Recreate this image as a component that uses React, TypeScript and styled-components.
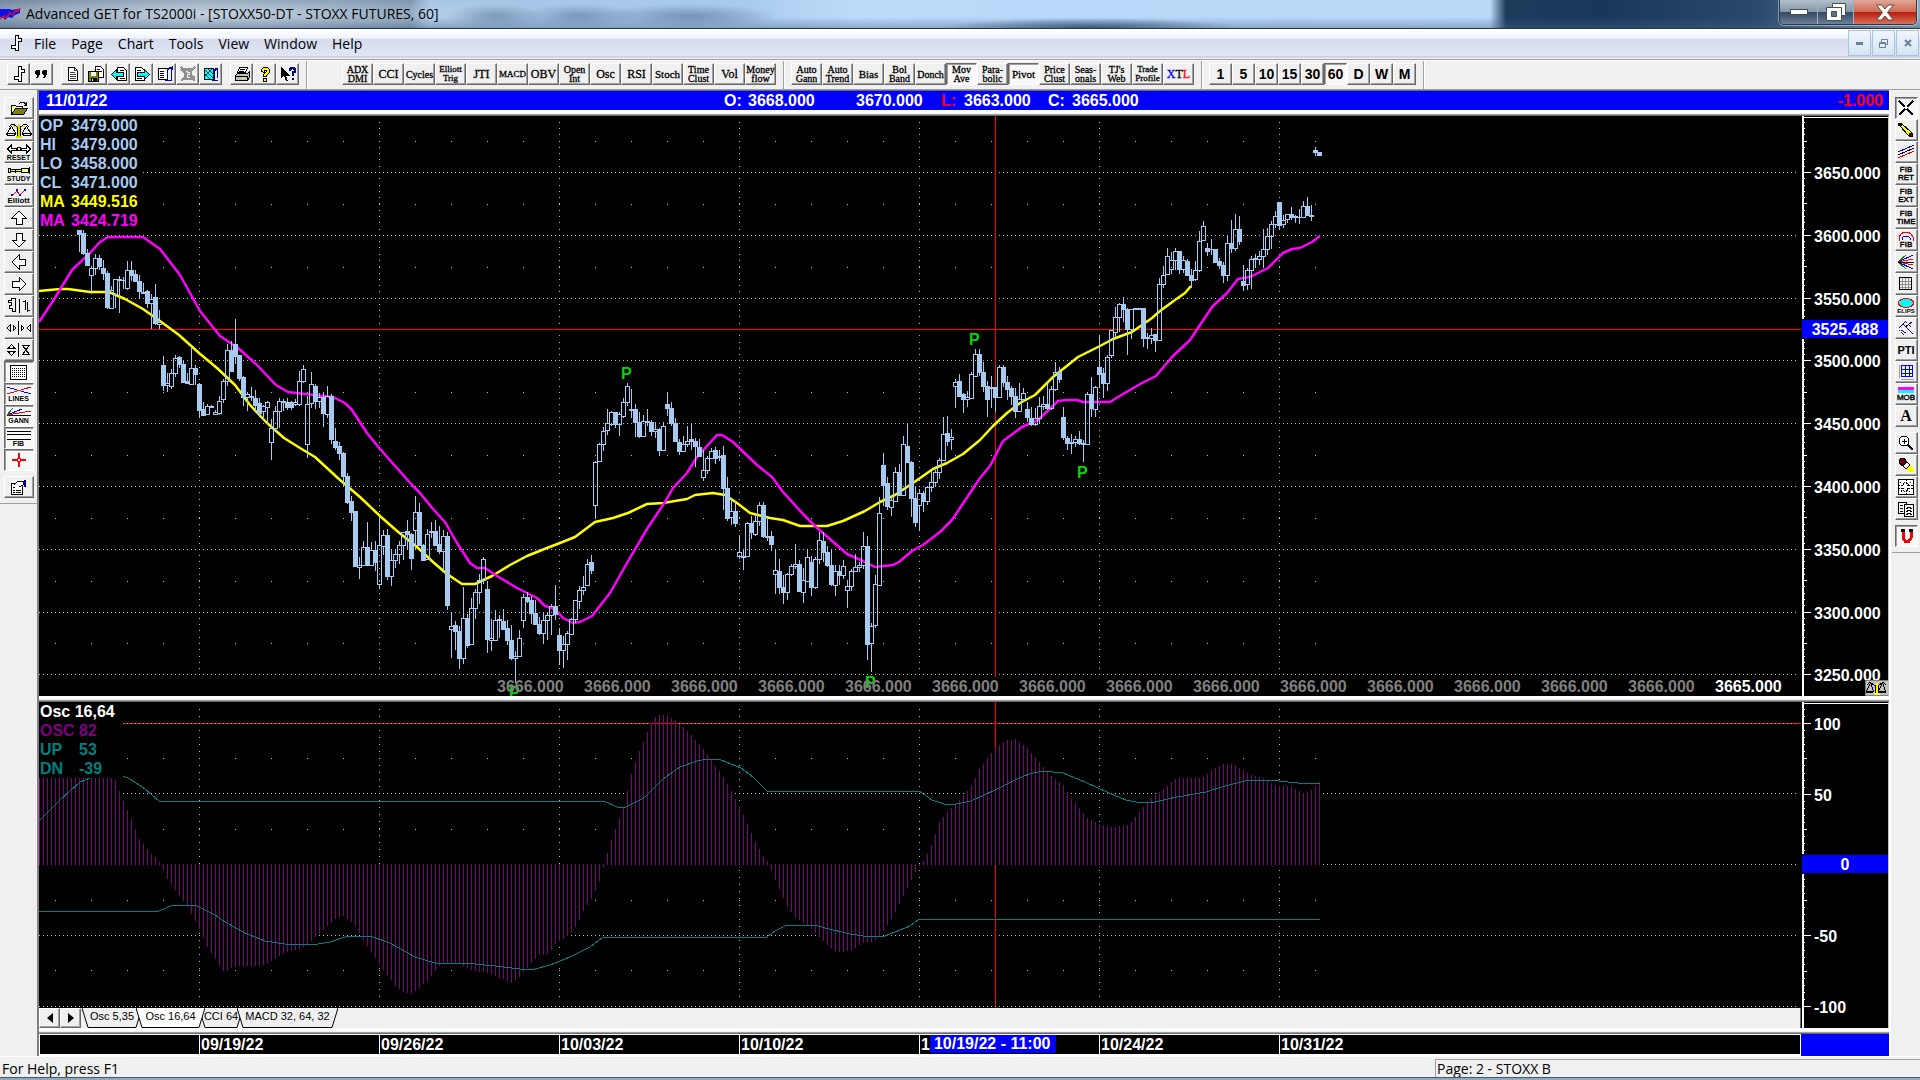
import React from 'react';
import styled, { createGlobalStyle, css } from 'styled-components';

const Global = createGlobalStyle`
  * { box-sizing: border-box; }
  html, body { margin: 0; padding: 0; }
  body { background: #f0f0f0; color: #000; font-family: 'Open Sans', 'Noto Sans', sans-serif; font-size: 14px; overflow: hidden; }
  button { font: inherit; color: inherit; margin: 0; padding: 0; border: 0; background: none; }
  svg { display: block; }
`;

const arial = "'Liberation Sans', Arial, sans-serif";

/* ---------- window frame ---------- */

const Window = styled.div`
  display: flex;
  flex-direction: column;
  height: 100vh;
  background: #f0f0f0;
  border-bottom: 2px solid #8fa9c0;
`;

const TitleBar = styled.header`
  display: flex;
  align-items: center;
  flex: 0 0 29px;
  border-bottom: 1px solid #2b3644;
  padding: 0 3px 0 0;
  background:
    radial-gradient(ellipse 480px 26px at 210px 14px, rgba(214, 226, 238, 0.75), rgba(214, 226, 238, 0) 75%),
    radial-gradient(ellipse 50px 12px at 495px 16px, rgba(62, 92, 128, 0.55), transparent),
    radial-gradient(ellipse 60px 12px at 580px 16px, rgba(62, 92, 128, 0.45), transparent),
    radial-gradient(ellipse 90px 12px at 690px 16px, rgba(62, 92, 128, 0.5), transparent),
    radial-gradient(ellipse 150px 10px at 1090px 28px, rgba(52, 82, 116, 0.9), transparent),
    linear-gradient(180deg, transparent 60%, rgba(70, 100, 130, 0.4)),
    linear-gradient(90deg, #6d8399 0, #8ba0b5 200px, #7590aa 410px, #a4c4e4 430px, #a9cbeb 740px, #bcdcfb 860px, #b7d8f8 1040px, #b9d9f8 1490px, #1d3c5c 1506px, #18375a 1600px, #2a496b 1760px, #93a9bd 100%);
`;

const Title = styled.h1`
  flex: 1;
  margin: 0;
  padding-left: 5px;
  font-size: 14px;
  font-weight: 400;
  line-height: 28px;
  white-space: nowrap;
`;

const Captions = styled.div`
  display: flex;
  align-self: flex-start;
  height: 25px;
  border: 1px solid #26394d;
  border-top: 0;
  border-radius: 0 0 5px 5px;
  overflow: hidden;
  box-shadow: 0 0 0 1px rgba(255, 255, 255, 0.4);
`;

const Caption = styled.button<{ $w: number; $close?: boolean }>`
  display: flex;
  align-items: center;
  justify-content: center;
  width: ${p => p.$w}px;
  border-right: 1px solid #9fb0c0;
  background: linear-gradient(180deg, #b3bfca 0, #8496a8 48%, #33475e 50%, #6b8199 100%);
  ${p => p.$close && css`
    border: 0;
    background: linear-gradient(180deg, #e0a596 0, #cf6c56 48%, #b81b0c 50%, #d8705a 100%);
  `}
`;

const MenuBar = styled.nav`
  display: flex;
  align-items: center;
  flex: 0 0 31px;
  padding: 0 0 2px 8px;
  border-bottom: 1px solid #a0a0a0;
  background: linear-gradient(180deg, #fff 0, #f2f4fa 9px, #d5dbed 10px, #e1e6f5 27px, #b6bccc 28px, #f0f0f0 29px);
`;

const MenuList = styled.div`
  display: flex;
  gap: 1px;
  flex: 1;
  padding-left: 3px;
`;

const MenuItem = styled.button`
  height: 26px;
  padding: 0 7px;
`;

const DocButton = styled.button`
  display: flex;
  align-items: center;
  justify-content: center;
  width: 23px;
  height: 26px;
  margin-right: 1px;
  border: 1px solid #a9c3dc;
  background: linear-gradient(180deg, #f0f6fc, #d4e5f6);
`;

/* ---------- toolbars ---------- */

const Toolbars = styled.div`
  display: flex;
  flex: 0 0 30px;
  border-top: 1px solid #fff;
  border-bottom: 1px solid #a0a0a0;
`;

const ToolGroup = styled.div<{ $after?: number }>`
  display: flex;
  align-items: flex-start;
  padding: 2px 7px 0 7px;
  margin-right: ${p => p.$after ?? 0}px;
  border-right: 1px solid #a0a0a0;
  box-shadow: 1px 0 0 #fff;
`;

const Spacer = styled.div<{ $h?: boolean }>`
  flex: 0 0 ${p => (p.$h ? 5 : 8)}px;
`;

const pressedLook = css`
  border-color: #696969 #fff #fff #696969;
  background: #f8f8f8;
  box-shadow: inset 1px 1px 0 #a0a0a0;
`;

const raisedLook = css`
  border-color: #fff #696969 #696969 #fff;
  background: #f0f0f0;
  box-shadow: inset -1px -1px 0 #a0a0a0;
`;

const ToolButton = styled.button<{ $w: number; $down?: boolean }>`
  display: flex;
  flex-direction: column;
  align-items: center;
  justify-content: center;
  flex: none;
  width: ${p => p.$w}px;
  height: 22px;
  border: 1px solid;
  overflow: hidden;
  white-space: nowrap;
  ${p => (p.$down ? pressedLook : raisedLook)}
`;

const StudyText = styled.span<{ $size: number }>`
  font: ${p => p.$size}px/9px 'Liberation Serif', 'Times New Roman', serif;
  -webkit-text-stroke: 0.3px #000;
`;

const Tint = styled.span<{ $c: string }>`
  color: ${p => p.$c};
  -webkit-text-stroke-color: ${p => p.$c};
`;

const FrameText = styled.span`
  font: bold 14px/18px ${arial};
`;

const Tiny = styled.span<{ $size?: number; $bold?: boolean; $serif?: boolean }>`
  font-family: ${p => (p.$serif ? "'Liberation Serif', serif" : arial)};
  font-size: ${p => p.$size ?? 7}px;
  line-height: ${p => p.$size ?? 7}px;
  font-weight: ${p => (p.$bold ? 700 : 400)};
  ${p => !p.$bold && '-webkit-text-stroke: 0.4px #000;'}
`;

const Body = styled.main`
  display: flex;
  flex: 1;
  min-height: 0;
`;

const SideBar = styled.aside<{ $w: number; $end: number }>`
  display: flex;
  flex-direction: column;
  align-items: center;
  align-self: flex-start;
  flex: 0 0 ${p => p.$w}px;
  padding: 7px 0 ${p => p.$end}px 0;
  border-bottom: 1px solid #a0a0a0;
`;

/* ---------- chart area ---------- */

const Charts = styled.section`
  display: flex;
  flex-direction: column;
  flex: 1;
  min-width: 0;
  border-left: 2px solid #808080;
  border-right: 2px solid #fff;
  margin-right: 1px;
`;

const InfoBar = styled.div`
  display: flex;
  align-items: center;
  flex: 0 0 20px;
  padding: 0 6px 0 7px;
  border-top: 1px solid #696969;
  background: #0000ff;
  color: #fff;
  font: bold 16px/19px ${arial};
`;

const Field = styled.span<{ $w: number; $red?: boolean }>`
  flex: 0 0 ${p => p.$w}px;
  ${p => p.$red && 'color: #ff0000;'}
`;

const Change = styled.span`
  margin-left: auto;
  color: #ff0000;
`;

const Divider = styled.div`
  flex: 0 0 6px;
  background: linear-gradient(180deg, #fff 0 3px, #f0f0f0 3px 4px, #a0a0a0 4px 5px, #696969 5px 6px);
`;

const Row = styled.div<{ $grow?: boolean }>`
  display: flex;
  flex: ${p => (p.$grow ? '1 1 0' : 'none')};
  min-height: 0;
  background: #000;
`;

const Plot = styled.div`
  position: relative;
  flex: 1;
  min-width: 0;
  overflow: hidden;
  background: #000;
`;

const OscColumn = styled.div`
  display: flex;
  flex-direction: column;
  flex: 1;
  min-width: 0;
`;

const OscPlot = styled(Plot)`
  flex: 0 0 306px;
`;

const Canvas = styled.svg`
  width: 100%;
  height: 100%;
  text { font: bold 16px ${arial}; }
`;

const Axis = styled.div`
  flex: 0 0 88px;
  background: #000;
  border-right: 1px solid #c8c4bc;
`;

const Legend = styled.dl<{ $w: number; $label: number }>`
  position: absolute;
  left: 0;
  top: 0;
  display: grid;
  grid-template-columns: ${p => p.$label}px auto;
  width: ${p => p.$w}px;
  margin: 0;
  padding-left: 1px;
  background: #000;
  color: #a6caf0;
  font: bold 16px/19px ${arial};
  white-space: nowrap;
`;

const Term = styled.dt<{ $c?: string; $wide?: boolean }>`
  color: ${p => p.$c ?? 'inherit'};
  ${p => p.$wide && 'grid-column: 1 / 3;'}
`;

const Value = styled.dd<{ $c?: string }>`
  margin: 0;
  color: ${p => p.$c ?? 'inherit'};
`;

const TabStrip = styled.div`
  display: flex;
  flex: 0 0 20px;
  background: #f0f0f0;
  border-right: 1px solid #696969;
`;

const ScrollButton = styled.button`
  display: flex;
  align-items: center;
  justify-content: center;
  width: 21px;
  height: 20px;
  border: 1px solid;
  ${raisedLook}
`;

const Tabs = styled.div`
  display: flex;
  padding-left: 7px;
`;

const Tab = styled.button<{ $w: number; $on?: boolean }>`
  position: relative;
  flex: 0 0 ${p => p.$w}px;
  height: 20px;
  margin-left: -6px;
  z-index: ${p => (p.$on ? 2 : 1)};
  font: 11px/15px ${arial};
  white-space: nowrap;
`;

const TabShape = styled.svg`
  position: absolute;
  inset: 0;
  width: 100%;
  height: 100%;
`;

const TabLabel = styled.span`
  position: relative;
  display: block;
  height: 19px;
`;

const DateRow = styled.div`
  display: flex;
  flex: 0 0 22px;
`;

const DateStrip = styled.div`
  display: flex;
  flex: 1;
  min-width: 0;
  overflow: hidden;
  border: 1px solid #fff;
  border-bottom-width: 2px;
  background: #000;
  color: #fff;
  font: bold 16px/19px ${arial};
`;

const DateCell = styled.div<{ $first?: boolean }>`
  display: flex;
  flex: 0 0 ${p => (p.$first ? 159 : 180)}px;
  padding-left: 1px;
  border-left: ${p => (p.$first ? 0 : 1)}px solid #fff;
  white-space: nowrap;
`;

const Cursor = styled.span`
  height: 18px;
  line-height: 18px;
  padding: 0 6px 0 4px;
  background: #0000ff;
`;

const DateEnd = styled.div`
  flex: 0 0 88px;
  background: #0000ff;
`;

const StatusBar = styled.footer`
  display: flex;
  flex: 0 0 22px;
  padding-top: 2px;
  border-top: 1px solid #fff;
  line-height: 18px;
  overflow: hidden;
  border-bottom: 1px solid #44576b;
`;

const StatusText = styled.div`
  flex: 1;
  padding: 1px 0 0 2px;
`;

const StatusPage = styled.div`
  flex: 0 0 485px;
  padding-left: 1px;
  border-left: 1px solid #a0a0a0;
  border-top: 1px solid #a0a0a0;
`;

/* ---------- icons ---------- */

type IconProps = { w?: number; h?: number; children: React.ReactNode };
const Icon = ({ w = 16, h = 16, children }: IconProps) => (
  <svg width={w} height={h} viewBox={`0 0 ${w} ${h}`} shapeRendering="crispEdges" fill="none" stroke="#000" aria-hidden="true">
    {children}
  </svg>
);

const BarGlyph = () => <Icon><path d="M7.5 .5h3v3h3v3h-3v9h-3v-2h-4v-3h4z" fill="#fff" /></Icon>;
const QuoteGlyph = () => (
  <Icon>
    <path d="M2 4h4v5h-1v2h-1v1h-2v-1h1v-2h-1v-1h-1v-3h1zM9 4h4v5h-1v2h-1v1h-2v-1h1v-2h-1v-1h-1v-3h1z" fill="#000" stroke="none" />
  </Icon>
);
const NewGlyph = () => <Icon><path d="M3.5 1.5h6l3 3v10h-9z" fill="#fff" /><path d="M9.5 1.5v3h3M5 6.500h5M5 8.500h6M5 10.500h6M5 12.500h6" stroke="#404040" /></Icon>;
const SaveGlyph = () => (
  <Icon>
    <path d="M7.500 .5h5l3 3v8h-8zM9 3.500h3M9 5.500h5" fill="#fff" />
    <path d="M.5 5.500h10v10h-10z" fill="#808000" /><path d="M3 6h5v4h-5z" fill="#fff" stroke="none" /><path d="M3 12h6v3h-6z" fill="#000" stroke="none" /><path d="M4 13h1v2h-1z" fill="#fff" stroke="none" />
  </Icon>
);
const PageLeft = () => <Icon><path d="M6.500 1.500h6l3 3v10h-9z" fill="#fff" /><path d="M9 4.500h4M9 12.500h5" /><path d="M.5 8.500l5-5v3h7v4h-7v3z" fill="#00ffff" /></Icon>;
const PageRight = () => <Icon><path d="M1.500 1.500h6l3 3v10h-9z" fill="#fff" /><path d="M3 4.500h4M3 12.500h5" /><path d="M15.500 8.500l-5-5v3h-7v4h7v3z" fill="#00ffff" /></Icon>;
const PageTurn = () => <Icon><path d="M1.500 2.500h9v11h-9z" fill="#fff" /><path d="M3 5.500h4M3 7.500h4M3 9.500h4M3 11.500h4" /><path d="M10.500 14v-10l2-2h2v12l-2 1M8 14.500h5M12 2l3-1v3" stroke="#0000c0" /></Icon>;
const GreyPage = () => <Icon><path d="M4 2h8v12h-8z" fill="#909090" stroke="none" /><path d="M1 1l14 14M15 1l-14 14M1 3l5 5M10 8l5 4" stroke="#909090" strokeWidth="2" /><path d="M6 5h1v1h2v2h-2v3h3" stroke="#f0f0f0" /></Icon>;
const HatchPage = () => <Icon><path d="M1.500 2.500h9v11h-9z" fill="#00ffff" /><path d="M1 3l9 9M4 2l7 7M1 7l7 7M9 3l-8 8" stroke="#004050" /><path d="M11.500 14v-10l2-2h1v10M9 14.500h6M12 5l3-3" stroke="#0000c0" /></Icon>;
const PrintGlyph = () => <Icon><path d="M5.500 1.500h8l-2 5h-8z" fill="#fff" /><path d="M6 3.500h5M5 5.500h5" /><path d="M3.500 7.500h10l2-2v6l-2 3h-12v-5z" fill="#c0c0c0" /><path d="M2 10.500h11v4" /><path d="M8 12h3v1h-3z" fill="#ff0" stroke="none" /></Icon>;
const HelpGlyph = () => <Icon><path d="M4.500 5.500v-2l2-2h4l2 2v3l-3 3v1h-3v-2l3-3v-1h-2v2zM6.500 12.500h3v3h-3z" fill="#ff0" /></Icon>;
const WhatGlyph = () => <Icon><path d="M1 1v11l3-2 2 5h2l-2-5h4z" fill="#000" stroke="none" /><path d="M10 5v-2h1v-1h3v1h1v3h-2v4M13 12v2" stroke="#000080" strokeWidth="2" /></Icon>;

const OpenIcon = () => <Icon w={18}><path d="M1.500 14.500v-9h4l1 1h6v2" fill="#ffff80" /><path d="M1.500 14.500l4-6h12l-4 6z" fill="#808000" /><path d="M9 3.500l2-1h3l2 2M16.500 2v3h-3" /></Icon>;
const ScalesIcon = () => (
  <Icon w={26}>
    <path d="M13 2v13M10 14.500h6" stroke="#d8d800" strokeWidth="2" />
    <path d="M7 4.500h12" stroke="#d8d800" />
    <path d="M3 4.500l3-2h2l4 3M23 4.500l-3-2h-2l-4 3M5.500 4l-4 7M5.500 4l4 7M20.500 4l-4 7M20.500 4l4 7M.5 11.500h9l-1 2h-7zM16.500 11.500h9l-1 2h-7zM11.500 5v9M14.500 5v9" />
  </Icon>
);
const ResetIcon = () => <Icon w={24} h={10}><path d="M.5 5l4-4v3h5v2h-5v3zM23.500 5l-4-4v3h-5v2h5v3zM10.500 3.500h3v3h-3z" fill="#fff" /></Icon>;
const StudyIcon = () => <Icon w={24} h={9}><path d="M3 3.500h12v2h-12z" fill="#ff0" /><path d="M1.500 2.500v4h2v-4zM8.500 3v4M14 2.500h7v4h-7zM22.500 1v7" fill="#ffff80" /></Icon>;
const ElliottIcon = () => <Icon w={20} h={9}><path d="M3 8l5-5 3 4 5-5" stroke="#f00" /><path d="M2 6h2v2h-2zM7 1h2v2h-2zM10 6h2v2h-2zM15 1h2v2h-2z" fill="#00f" stroke="none" /></Icon>;
const ArrowIcon = ({ turn }: { turn: number }) => <Icon><g transform={`rotate(${turn} 8 8)`}><path d="M8 1l7 7h-4v6.500h-6v-6.500h-4z" fill="#fff" /></g></Icon>;
const BarsIcon = () => <Icon w={24}><path d="M1.500 2.500h3v-2h4v13h-3v-3h-3v-3h2v-3h-3zM12.500 1v14M18.500 2v10M20.500 4v10M16 3.500h3M20 12.500h3" /></Icon>;
const WideIcon = () => <Icon w={26}><path d="M12.500 1v14M1 8l3-3v6zM10 8l-3-3v6zM15 5v6l3-3zM24 5v6l-3-3z" /></Icon>;
const TallIcon = () => <Icon w={24}><path d="M11.500 1v14M1 6.500h7l-3.500-4zM1 9.500h7l-3.500 4zM15 3.500h8M15 12.500h8M16 4l6 8M22 4l-6 8" /></Icon>;
const GridIcon = () => <Icon w={17} h={15}><path d="M.5 .5h16v14h-16z" fill="#fff" /><path d="M2 3.500h13M2 5.500h13M2 7.500h13M2 9.500h13M2 11.500h13" strokeDasharray="1 1" /></Icon>;
const LinesIcon = () => <Icon w={24} h={9}><path d="M0 1l24 7" stroke="#00f" /><path d="M0 8l24-7" stroke="#f00" /></Icon>;
const GannIcon = () => <Icon w={24} h={9}><path d="M0 7l6-7" stroke="#080" /><path d="M0 7l15-6" stroke="#00f" /><path d="M0 7l24-4" stroke="#f00" /><path d="M0 7.500h24" /></Icon>;
const FibIcon = () => <Icon w={24} h={10}><path d="M0 1.500h24M0 4.500h24M0 9.500h24" /></Icon>;
const CrossIcon = () => <Icon><path d="M8 1v5M8 10v5M1 8h5M10 8h5" stroke="#f00" strokeWidth="2" /><path d="M6.500 6.500h3v3h-3z" stroke="#f00" /></Icon>;
const PropsIcon = () => <Icon w={17}><path d="M1.500 4.500h11v11h-11z" fill="#fff" /><path d="M3 8.500h2M3 11.500h2M3 13.500h2M6 11.500h5M6 13.500h5M4 6l4-4h5v4l-4 2" fill="#fff" /><path d="M14 1h2v7h-2z" fill="#000080" stroke="none" /></Icon>;

const XIcon = () => <Icon><path d="M1 1l5 5M15 1l-5 5M1 15l5-5M15 15l-5-5M6 6l1 1M10 10l-1-1M10 6l-1 1M6 10l1-1" strokeWidth="2" /></Icon>;
const PencilIcon = () => <Icon><path d="M3.500 1.500l10 9-3 3-9-10z" fill="#ff0" /><path d="M0 1h4v3h-4z" fill="#000" stroke="none" /><path d="M11 11h3v3h-3z" fill="#700010" /></Icon>;
const ParallelIcon = () => <Icon><path d="M0 8l16-7" stroke="#00f" /><path d="M0 11l16-7" /><path d="M0 14l16-7" stroke="#f00" /></Icon>;
const ArcIcon = () => <Icon h={10}><path d="M1 10v-4l2-3 3-2h4l3 2 2 3v4" stroke="#f00" /><path d="M4 9v-2l2-2h4l2 2v2" stroke="#00f" /></Icon>;
const FanIcon = () => <Icon><path d="M0 8l8-7M0 8l8 7" stroke="#080" /><path d="M0 8l15-7M0 8l15 7" stroke="#00f" /><path d="M0 8l15-3M0 8l15 3" stroke="#f00" /><path d="M0 8.500h16" /></Icon>;
const MeshIcon = () => <Icon><path d="M4.500 2v12M7.500 2v12M10.500 2v12M2 5.500h12M2 8.500h12M2 11.500h12" stroke="#909090" /><path d="M1.500 1.500h12v12h-12z" /></Icon>;
const EllipseIcon = () => <Icon h={10}><ellipse cx="8" cy="5" rx="7.500" ry="4.500" fill="#0ff" stroke="#f00" /></Icon>;
const ForkIcon = () => <Icon><path d="M5 4l10 10M5 4l-4 4M8 1l-7 7" stroke="#000080" /><path d="M1 10l5 5M8 2l5 5" stroke="#800" strokeDasharray="2 1" /><path d="M7 7l7-5M3 10l5 3" stroke="#008" /></Icon>;
const BlueGrid = () => <Icon><path d="M1 1v13M3 15.500h13" stroke="#a0a0a0" /><path d="M3.500 1.500h11v11h-11zM7.500 1v12M11.500 1v12M3 5.500h12M3 9.500h12" stroke="#00f" /></Icon>;
const MobIcon = () => <Icon h={7}><path d="M0 0h16v3h-16z" fill="#f0f" stroke="none" /><path d="M0 3h16v3h-16z" fill="#0ff" stroke="none" /></Icon>;
const ZoomIcon = () => <Icon><path d="M3.500 1.500h5l2 2v5l-2 2h-5l-2-2v-5z" fill="#fff" /><path d="M6.500 4v5M4 6.500h5" /><path d="M10 10l5 5" strokeWidth="2" /></Icon>;
const EraserIcon = () => <Icon><path d="M2 2l4-1 3 4-4 4-4-3z" fill="#700010" /><path d="M5 9l4-4 3 3-4 4z" fill="#fff" /><path d="M8 12l4-4 4 3v4h-6z" fill="#ff0" stroke="none" /></Icon>;
const TilesIcon = () => <Icon><path d="M.5 .5h15v15h-15z" fill="#fff" /><path d="M0 6.500h4l3-4M15 6.500h-4l-3-4M0 9.500h4l3 4M15 9.500h-4l-3 4M8 0v5M8 11v5M2 3l4 3M13 3l-4 4M3 13l3-4M12 13l-3-4" strokeDasharray="2 1" /></Icon>;
const PagesIcon = () => <Icon><path d="M.5 1.500h8v11h-8z" fill="#fff" /><path d="M6.500 3.500h9v12h-9z" fill="#fff" /><path d="M2 4.500h3M2 7.500h3M2 10.500h3M8 7.500l3-1 3 1M8 10.500l3-1 3 1M8 13.500l3-1 3 1" /></Icon>;
const MagnetIcon = () => <Icon><path d="M5 4v6l2 3h4l2-3v-6" stroke="#f00000" strokeWidth="3" /><path d="M3 1h4v3h-4zM11 1h4v3h-4z" fill="#000" stroke="none" /></Icon>;

/* ---------- data ---------- */

/* Each run holds bars four pixels apart: high,top,bottom,low in thirds of a pixel, with "f" for a filled body. */
const runs = [
  { x: 79, y: 90, bars: '420,420,432,488f 420,430,491,495f 478,489,527,530f 528,535,556,612 492,506,535,555 495,504,530,540f 510,535,550,570f 543,549,653,657f 588,600,655,657 567,568,612,655 560,567,572,671f 562,570,572,598 514,541,596,600 514,540,555,573f 540,553,575,578f 555,573,605,625f 580,606,611,612 602,603,640,655f 612,628,640,717 582,621,701,706f 660,697,703,719 800,825,885,905f 850,880,887,908 838,850,890,897 795,805,850,862 800,802,822,835f 815,823,878,880f 850,875,881,883f 768,835,884,887 825,835,852,885f 880,882,960,983f 937,958,975,977f 942,949,974,977 947,949,951,952 960,967,972,977 920,934,970,975 868,874,928,940 763,781,873,890 755,781,843,846f 687,763,798,823f 795,796,865,875f 858,862,923,948f 908,912,922,963 892,919,921,935 900,925,945,965f 925,940,970,982f 945,950,965,990 935,938,952,1005 988,1015,1057,1112 950,964,1016,1025 925,933,965,1015 928,933,937,965f 925,936,952,960f 935,937,952,962f 928,936,944,950 845,875,944,950 825,838,874,880' },
  { x: 307, y: 350, bars: '138,163,284,324 66,103,160,175 103,109,155,178f 130,142,153,176 128,142,190,232f 110,138,192,205 132,138,268,283f 235,273,293,300f 277,290,310,330f 307,309,380,412f 370,378,458,462f 438,455,486,515f 483,484,650,651f 621,646,651,689 574,592,646,650 516,592,646,649f 577,602,646,649 573,601,638,664f 502,586,704,717 540,556,590,615 538,556,680,690f 600,631,680,708 598,613,632,655 573,586,613,642 547,547,586,632 510,544,553,597f 550,553,624,660f 438,487,540,598 460,487,587,590f 582,586,631,634f 538,552,629,632 516,544,548,565f 510,544,585,585f 530,584,604,612f 540,559,604,665 546,558,765,780f 788,830,838,926 813,826,845,900f 828,843,926,957f 712,805,926,942 793,805,886,895f 745,775,884,886 718,727,776,808 672,691,728,763 621,628,690,702 697,717,868,911f 808,866,872,903 780,812,871,872 795,808,810,866 778,813,838,842f 810,835,872,885f 825,870,926,932f 905,919,925,1000 840,865,920,922 732,742,812,834 726,741,755,760f 740,752,790,823f 752,790,824,826f 802,822,850,855f 790,811,850,884 790,796,811,870 763,768,796,855 705,768,793,810f 835,856,902,945f 860,883,902,954 845,850,884,930 806,808,854,855 750,751,808,820 710,721,755,778 680,712,721,736 628,643,707,708 615,637,661,674f 335,338,466,504 280,283,335,338 232,243,284,304 177,220,240,257 185,187,222,228 186,187,223,236f 188,193,224,258 146,157,200,204 99,109,157,168 119,178,180,205f 163,178,218,263f 186,216,260,264f 196,214,260,262 177,214,217,228 210,217,245,260f 217,238,244,266 235,238,302,320f 217,229,301,303 126,163,175,200f 157,175,220,230f 205,220,275,278f 267,277,305,316f 258,283,304,307 228,274,284,292 220,268,274,300f 265,273,290,353f 267,291,318,320f 300,360,382,395 318,325,361,373 295,303,325,328 293,301,326,344f 302,318,322,335f 290,316,415,480f 383,415,505,513f 448,485,503,525 455,485,520,532f 555,607,620,628 598,619,622,660f 518,520,620,622 500,519,548,568f 500,514,553,558 458,466,514,528 458,466,560,566f 503,560,563,573f 545,559,583,605f 598,661,673,732 628,664,713,732f 675,712,728,762f 670,673,728,750 643,650,674,680 582,643,650,657' },
  { x: 799, y: 320, bars: '720,733,815,817f 745,782,818,850 688,712,784,788 708,727,802,830f 712,718,803,808 636,661,718,732 636,663,696,727f 678,697,737,742f 688,736,793,798f 735,754,795,830 735,754,767,797f 722,739,766,777 780,800,811,866 747,754,800,815 702,742,755,756 728,737,742,758 636,679,737,747 648,679,974,1020f 909,920,970,1058 765,793,917,924 532,580,796,798 399,436,497,560f 472,490,560,570f 528,541,563,590 441,457,544,548 433,457,527,530f 348,374,526,528 310,378,428,430f 424,427,535,592f 498,535,608,622f 508,520,556,633 513,519,543,578f 498,502,544,555 453,487,502,516 450,457,488,500 415,421,457,478 293,343,421,424 290,340,365,380f 327,352,358,390 178,187,199,264 162,184,230,233f 220,223,238,279f 213,232,238,262 158,163,234,236 87,103,168,170 87,102,158,168f 128,156,200,217f 183,199,238,293f 168,202,205,264 202,203,233,278f 135,142,233,236 136,142,188,203f 168,187,208,242f 200,206,230,256f 204,229,275,296f 190,238,274,278 204,220,238,248 248,268,293,307f 262,295,314,318f 264,295,314,318 233,260,296,312 228,253,260,270 185,253,266,270f 198,208,266,272 126,157,208,214 142,157,179,190f 263,291,352,362f 348,355,370,392f 342,367,371,404 350,358,368,382 333,358,371,375f 360,371,374,428 216,222,374,377 171,222,266,293f 198,202,268,293 50,142,163,204f 145,160,190,236f 105,112,190,215' },
  { x: 1111, y: 120, bars: '630,631,707,714 563,592,637,656 549,553,592,637 531,553,567,606f 564,567,629,705f 567,569,627,657 564,566,568,570 564,566,568,570 565,565,656,681f 640,653,656,687 625,646,655,672 643,644,662,696f 474,493,661,664 438,466,493,504 384,409,463,466 398,421,449,462 384,394,421,452 393,394,449,462f 408,422,449,459 417,424,467,467f 448,466,480,506f 423,451,479,483 333,364,451,456 303,319,361,363 370,384,395,408f 357,387,389,405 387,388,426,430f 414,424,437,447f 428,435,467,489f 345,370,467,483 300,370,385,399f 282,328,385,393 288,327,365,375f 435,484,495,513f 444,451,493,510 408,418,452,507 403,415,418,444f 393,409,418,435 327,388,409,444 324,349,389,405 303,313,349,388 273,289,313,326 246,246,317,329f 285,301,313,324 283,284,299,311 261,283,291,300f 285,290,292,309 267,291,293,312 243,259,292,296 231,259,287,288f 255,286,288,303 81,90,98,108f 96,97,105,108f' },
];

const fastAverage = '39,291 60,289 68,289 90,292 109,292 125,299 143,309 160,321 179,335 199,353 217,368 235,385 250,405 267,423 284,438 300,448 315,457 340,480 360,497 380,516 397,531 417,547 433,562 447,574 462,584 475,584 492,576 510,565 527,556 547,548 560,543 575,537 595,522 613,518 628,513 647,504 663,503 687,499 695,495 713,493 725,495 737,503 750,513 770,518 783,520 800,526 827,526 843,521 865,511 880,502 895,495 913,483 933,469 947,463 963,454 980,440 993,426 1007,413 1020,403 1035,395 1053,377 1078,357 1100,346 1113,339 1132,332 1152,318 1160,311 1175,300 1185,293 1191,286';
const slowAverage = '39,322 53,301 72,270 90,253 100,242 108,237 143,237 160,249 180,275 200,311 220,336 238,348 256,364 276,385 288,392 305,394 333,397 345,403 352,410 367,433 380,449 412,485 420,493 433,509 445,522 457,543 470,563 477,568 485,568 497,576 517,588 537,598 545,606 555,609 563,618 573,623 580,622 592,616 610,593 627,563 647,529 665,502 673,488 687,473 697,457 717,435 722,435 733,442 757,465 772,477 783,492 803,514 815,526 847,554 863,561 875,567 893,565 899,562 912,551 923,545 940,532 952,520 970,493 980,478 990,466 1003,441 1022,427 1038,420 1058,401 1067,400 1077,400 1083,402 1110,402 1123,394 1142,383 1156,376 1172,357 1190,340 1200,325 1212,307 1227,293 1238,279 1250,277 1268,268 1283,253 1292,249 1300,248 1312,242 1320,236';
const upperBand = '39,821 60,800 80,782 95,776 110,773 123,776 130,779 145,789 152,795 159,801 604,801 617,807 626,807 644,798 663,779 680,767 697,761 708,759 721,760 741,768 753,777 767,791 919,791 932,800 944,804 956,804 971,801 995,790 1017,779 1029,774 1042,771 1063,773 1085,782 1109,793 1126,800 1136,802 1155,802 1177,797 1206,792 1225,786 1245,781 1269,780 1298,783 1320,784';
const lowerBand = '39,911 159,911 173,905 195,905 215,915 225,922 245,933 265,941 285,944 312,945 330,942 348,936 370,936 390,943 415,957 435,963 465,963 495,966 520,969 535,969 550,965 570,957 590,947 603,937 767,937 775,931 785,926 795,925 815,925 825,928 850,934 870,937 885,936 900,930 910,926 919,919 1320,919';

const oscillator: number[][] = '39,760 111,776 115,780 119,791 123,801 127,810 131,819 135,830 139,839 143,844 147,849 151,854 155,857 159,862 163,870 167,879 171,884 175,890 180,896 188,909 196,923 203,938 207,947 215,959 223,971 227,971 231,968 241,966 261,966 269,962 286,952 302,948 312,940 324,929 337,917 343,916 349,920 355,926 363,940 380,966 388,976 396,987 404,993 411,994 420,987 429,979 437,968 443,963 457,963 473,971 490,973 502,979 511,983 519,977 531,963 539,955 548,954 555,944 567,936 576,926 584,909 592,898 600,878 603,867 607,853 611,840 615,829 619,819 624,804 631,774 639,751 647,732 651,723 655,717 659,715 668,716 675,720 687,731 699,744 711,760 721,774 731,791 740,809 748,826 755,842 762,855 767,861 771,870 779,889 787,907 795,917 803,923 812,930 820,938 828,946 836,952 844,952 852,950 864,942 872,942 880,936 891,919 899,904 908,886 916,870 920,864 924,860 931,845 939,822 947,812 959,800 972,785 979,769 988,757 995,748 1004,741 1015,739 1027,748 1039,762 1052,777 1064,786 1071,799 1080,809 1088,819 1099,824 1111,827 1128,825 1136,816 1148,800 1162,790 1176,778 1201,778 1213,769 1224,763 1235,765 1251,775 1264,778 1276,786 1288,786 1304,793 1312,789 1319,782'
  .split(' ').map(p => p.split(',').map(Number));

const ZERO = 864;
const levelAt = (x: number) => {
  const i = Math.max(1, oscillator.findIndex(p => p[0] >= x));
  const [x0, y0] = oscillator[i - 1];
  const [x1, y1] = oscillator[i];
  return Math.round(y0 + ((y1 - y0) * (x - x0)) / (x1 - x0));
};

const range = (n: number) => Array.from({ length: n }, (_, i) => i);

const bodies: React.ReactNode[] = [];
let wicks = '';
runs.forEach(run => {
  run.bars.split(' ').forEach((bar, i) => {
    const filled = bar.endsWith('f');
    const [hi, top, bot, lo] = bar.replace('f', '').split(',').map(v => run.y + Math.floor(Number(v) / 3));
    const x = run.x + 4 * i;
    wicks += filled ? `M${x + 0.5} ${hi}V${lo}` : `M${x + 0.5} ${hi}V${top}M${x + 0.5} ${bot}V${lo}`;
    bodies.push(
      filled
        ? <rect key={x} x={x - 2} y={top} width={5} height={Math.max(1, bot - top + 1)} fill="#a6caf0" />
        : <rect key={x} x={x - 1.5} y={top + 0.5} width={4} height={Math.max(0.1, bot - top)} fill="none" stroke="#a6caf0" />,
    );
  });
});

const dotted = (rows: number[], cols: number[]) => rows.map(y => cols.map(x => `M${x} ${y + 0.5}h1`).join('')).join('');
const weeks = range(7).map(i => 199 + 180 * i);
const days = range(36).map(i => 55 + 36 * i);
const priceRows = range(9).map(i => Math.round(172 + 62.800 * i));
const priceDots = dotted(range(90).map(i => Math.round(121.800 + 6.280 * i)).filter(y => y < 676), weeks)
  + dotted(range(9).map(i => Math.round(141 + 62.800 * i)), days);
const oscDots = dotted(range(42).map(i => 709 + 7 * i), weeks) + dotted([758, 829, 900, 970], days);

const PriceChart = () => (
  <Canvas shapeRendering="crispEdges" role="img" aria-label="Hourly price chart">
    <g transform="translate(-39 -116)" fill="none">
      <path d={priceDots} stroke="#c0c0c0" />
      {priceRows.map(y => <path key={y} d={`M39 ${y + 0.5}H1798`} stroke="#c0c0c0" strokeDasharray="1 3" />)}
      <path d="M39 329.500H2600M995.500 116V677" stroke="#f00" />
      <polyline points={fastAverage} stroke="#ff0" strokeWidth="2.500" shapeRendering="auto" strokeLinejoin="round" />
      <polyline points={slowAverage} stroke="#f0f" strokeWidth="2.500" shapeRendering="auto" strokeLinejoin="round" />
      <path d={wicks} stroke="#a6caf0" />
      {bodies}
      <g fill="#00d800">
        <text x="621" y="379">P</text><text x="969" y="345">P</text><text x="1077" y="478">P</text>
        <text x="865" y="688">P</text><text x="509" y="698">P</text>
      </g>
      {range(15).map(i => <text key={i} x={497 + 87 * i} y="692" fill={i === 14 ? '#fff' : '#808080'}>{i === 14 ? '3665.000' : '3666.000'}</text>)}
    </g>
  </Canvas>
);

const OscChart = () => (
  <Canvas shapeRendering="crispEdges" role="img" aria-label="Oscillator chart">
    <g transform="translate(-39 -702)" fill="none">
      <path d={oscDots} stroke="#c0c0c0" />
      {[793, ZERO, 935, 1006].map(y => <path key={y} d={`M39 ${y + 0.500}H1798`} stroke="#c0c0c0" strokeDasharray="1 3" />)}
      <path d="M39 723.500H2600" stroke="#f00" />
      <path d="M39 723.500H1798" stroke="#7fd0c8" strokeDasharray="1 3" />
      <path d="M995.500 702V1006" stroke="#f00" />
      <path
        d={range(321).map(i => 39 + 4 * i).map(x => {
          const y = levelAt(x);
          return `M${x + 0.5} ${y < ZERO ? ZERO + 1 : ZERO}V${y}`;
        }).join('')}
        stroke="#800080"
      />
      <polyline points={upperBand} stroke="#008080" />
      <polyline points={lowerBand} stroke="#008080" />
    </g>
  </Canvas>
);

type AxisProps = { top: number; first: number; step: number; count: number; from: number; labels: string[]; boxY: number; box: string; children?: React.ReactNode };
const Scale = ({ top, first, step, count, from, labels, boxY, box, children }: AxisProps) => (
  <Canvas shapeRendering="crispEdges" role="img" aria-label="Value scale">
    <g transform={`translate(0 ${-top})`}>
      <path d={`M1 ${top + 1.5}H87`} stroke="#fff" fill="none" />
      <path d={`M2 ${top}V1200`} stroke="#fff" strokeWidth="2" />
      {range(count).map(i => {
        const n = i - from;
        const y = Math.round(first + n * step) + 0.5;
        return <path key={i} d={`M2 ${y}h${n % 10 === 0 ? 8 : n % 5 === 0 ? 4 : 2}`} stroke="#fff" />;
      })}
      {labels.map((t, i) => <text key={t} x="13" y={Math.round(first + i * step * 10) + 7} fill="#fff">{t}</text>)}
      <rect x="0" y={boxY - 1} width="88" height="20" fill="#000" />
      <rect x="1" y={boxY} width="86" height="18" fill="#00f" />
      <text x="44" y={boxY + 15} textAnchor="middle" fill="#fff">{box}</text>
      {children}
    </g>
  </Canvas>
);

const studies: [string[], number][] = [
  [['ADX', 'DMI'], 10], [['CCI'], 12], [['Cycles'], 10], [['Elliott', 'Trig'], 9], [['JTI'], 12], [['MACD'], 9], [['OBV'], 12],
  [['Open', 'Int'], 10], [['Osc'], 12], [['RSI'], 12], [['Stoch'], 11], [['Time', 'Clust'], 10], [['Vol'], 12], [['Money', 'flow'], 10],
];
const overlays: [string[], number, boolean?][] = [
  [['Auto', 'Gann'], 10], [['Auto', 'Trend'], 10], [['Bias'], 11], [['Bol', 'Band'], 10], [['Donch'], 10], [['Mov', 'Ave'], 10, true],
  [['Para-', 'bolic'], 10], [['Pivot'], 11, true], [['Price', 'Clust'], 10], [['Seas-', 'onals'], 10], [["TJ's", 'Web'], 10], [['Trade', 'Profile'], 9],
];
const frames = ['1', '5', '10', '15', '30', '60', 'D', 'W', 'M'];

const leftTools: [string, React.ReactNode, boolean?][] = [
  ['Open', <OpenIcon />], ['Scales', <ScalesIcon />],
  ['Reset', <><ResetIcon /><Tiny $bold>RESET</Tiny></>], ['Study', <><StudyIcon /><Tiny $bold>STUDY</Tiny></>],
  ['Elliott', <><ElliottIcon /><Tiny $size={8} $bold>Elliott</Tiny></>],
  ['Up', <ArrowIcon turn={0} />], ['Down', <ArrowIcon turn={180} />], ['Left', <ArrowIcon turn={270} />], ['Right', <ArrowIcon turn={90} />],
  ['Bars', <BarsIcon />], ['Bar spacing', <WideIcon />], ['Price spacing', <TallIcon />], ['Grid', <GridIcon />, true],
  ['Lines', <><LinesIcon /><Tiny $bold>LINES</Tiny></>, true], ['Gann', <><GannIcon /><Tiny $bold>GANN</Tiny></>, true],
  ['Fibonacci', <><FibIcon /><Tiny $bold>FIB</Tiny></>, true], ['Crosshair', <CrossIcon />, true],
];

const fibText = (a: string, b: string) => <><Tiny $size={8}>{a}</Tiny><Tiny $size={8}>{b}</Tiny></>;
const rightTools: [string, React.ReactNode, boolean?][] = [
  ['Pointer', <XIcon />, true], ['Draw', <PencilIcon />], ['Channel', <ParallelIcon />],
  ['Retracement', fibText('FIB', 'RET')], ['Extension', fibText('FIB', 'EXT')], ['Time', fibText('FIB', 'TIME')],
  ['Arcs', <><ArcIcon /><Tiny $size={8}>FIB</Tiny></>], ['Fan', <FanIcon />], ['Mesh', <MeshIcon />],
  ['Ellipse', <><EllipseIcon /><Tiny $bold $size={6}>ELIPS</Tiny></>], ['Pitchfork', <ForkIcon />],
  ['PTI', <Tiny $bold $size={11}>PTI</Tiny>], ['Square', <BlueGrid />], ['MOB', <><MobIcon /><Tiny $size={8}>MOB</Tiny></>],
  ['Text', <Tiny $bold $serif $size={16}>A</Tiny>],
];
const viewTools: [string, React.ReactNode][] = [['Zoom', <ZoomIcon />], ['Erase', <EraserIcon />], ['Tile', <TilesIcon />], ['Copy', <PagesIcon />]];

const fileTools: React.ReactNode[] = [<NewGlyph />, <SaveGlyph />, <PageLeft />, <PageRight />, <PageTurn />, <GreyPage />, <HatchPage />];
const helpTools: React.ReactNode[] = [<PrintGlyph />, <HelpGlyph />, <WhatGlyph />];
const glyphButtons = (icons: React.ReactNode[], name: string) =>
  icons.map((icon, i) => <ToolButton key={i} $w={23} aria-label={`${name} ${i + 1}`}>{icon}</ToolButton>);

const tabs: [string, number, boolean?][] = [['Osc 5,35', 60], ['Osc 16,64', 69, true], ['CCI 64', 44], ['MACD 32, 64, 32', 101]];

export default function App() {
  return (
    <Window>
      <Global />
      <TitleBar>
        <svg width="21" height="14" viewBox="0 0 21 14" aria-hidden="true">
          <path d="M0 2h10l2 1 4-1h4v4l-5 2-3 3-4-1-3 3-2-3H0z" fill="#1010e8" />
          <path d="M0 12l4-3 2 2 4-5 3 2 3-5 2 1 2-3" stroke="#d01030" strokeWidth="1.500" fill="none" />
        </svg>
        <Title>Advanced GET for TS2000i - [STOXX50-DT - STOXX FUTURES, 60]</Title>
        <Captions>
          <Caption $w={38} aria-label="Minimize"><svg width="18" height="6"><rect x=".5" y=".5" width="17" height="5" fill="#fff" stroke="#444c58" /></svg></Caption>
          <Caption $w={36} aria-label="Restore">
            <svg width="22" height="18" fill="#fff" stroke="#444c58"><path d="M7.500 .5h13v12h-13z" /><path d="M1.500 4.500h15v13h-15z" /><path d="M6.500 8.500h5v5h-5z" fill="#607488" /></svg>
          </Caption>
          <Caption $w={62} $close aria-label="Close">
            <svg width="20" height="17"><path d="M1.500 1h5l3.500 4 3.500-4h5l-6 7.500 6 7.500h-5l-3.500-4-3.500 4h-5l6-7.500z" fill="#fff" stroke="#5a4448" /></svg>
          </Caption>
        </Captions>
      </TitleBar>

      <MenuBar>
        <BarGlyph />
        <MenuList>
          {['File', 'Page', 'Chart', 'Tools', 'View', 'Window', 'Help'].map(m => <MenuItem key={m}>{m}</MenuItem>)}
        </MenuList>
        <DocButton aria-label="Minimize chart"><svg width="7" height="3"><rect width="7" height="3" y="0" fill="#6c7f93" /></svg></DocButton>
        <DocButton aria-label="Restore chart"><svg width="9" height="9" fill="none" stroke="#6c7f93"><path d="M2.500 3v-2.500h6v5h-2M.5 3.500h6v5h-6zM.5 4.500h6" /></svg></DocButton>
        <DocButton aria-label="Close chart"><svg width="8" height="8" stroke="#6c7f93" strokeWidth="2"><path d="M1 1l6 6M7 1l-6 6" /></svg></DocButton>
      </MenuBar>

      <Toolbars>
        <ToolGroup $after={28}>
          {glyphButtons([<BarGlyph />, <QuoteGlyph />], 'Symbol')}
          <Spacer />
          {glyphButtons(fileTools, 'Page')}
          <Spacer />
          {glyphButtons(helpTools, 'Help')}
        </ToolGroup>
        <ToolGroup>
          {studies.map(([lines, size]) => (
            <ToolButton key={lines[0]} $w={31}>{lines.map(l => <StudyText key={l} $size={size}>{l}</StudyText>)}</ToolButton>
          ))}
        </ToolGroup>
        <ToolGroup>
          {overlays.map(([lines, size, down]) => (
            <ToolButton key={lines.join()} $w={31} $down={down}>{lines.map(l => <StudyText key={l} $size={size}>{l}</StudyText>)}</ToolButton>
          ))}
          <ToolButton $w={31}><StudyText $size={12}><Tint $c="#00f">X</Tint>T<Tint $c="#f00">L</Tint></StudyText></ToolButton>
        </ToolGroup>
        <ToolGroup>
          {frames.map(f => <ToolButton key={f} $w={23} $down={f === '60'}><FrameText>{f}</FrameText></ToolButton>)}
        </ToolGroup>
      </Toolbars>

      <Body>
        <SideBar $w={37} $end={5}>
          {leftTools.map(([name, icon, down]) => <ToolButton key={name} $w={30} $down={down} aria-label={name}>{icon}</ToolButton>)}
          <Spacer $h />
          <ToolButton $w={30} aria-label="Properties"><PropsIcon /></ToolButton>
        </SideBar>

        <Charts>
          <InfoBar>
            <Field $w={678}>11/01/22</Field>
            <Field $w={24}>O:</Field><Field $w={108}>3668.000</Field>
            <Field $w={85}>3670.000</Field>
            <Field $w={23} $red>L:</Field><Field $w={84}>3663.000</Field>
            <Field $w={24}>C:</Field><Field $w={68}>3665.000</Field>
            <Change>-1.000</Change>
          </InfoBar>
          <Divider />

          <Row $grow>
            <Plot>
              <PriceChart />
              <Legend $w={102} $label={31}>
                <Term>OP</Term><Value>3479.000</Value>
                <Term>HI</Term><Value>3479.000</Value>
                <Term>LO</Term><Value>3458.000</Value>
                <Term>CL</Term><Value>3471.000</Value>
                <Term $c="#ff0">MA</Term><Value $c="#ff0">3449.516</Value>
                <Term $c="#f0f">MA</Term><Value $c="#f0f">3424.719</Value>
              </Legend>
            </Plot>
            <Axis>
              <Scale top={116} first={172} step={6.280} count={89} from={8} boxY={320} box="3525.488"
                labels={['3650.000', '3600.000', '3550.000', '3500.000', '3450.000', '3400.000', '3350.000', '3300.000', '3250.000']}>
                <g transform="translate(64 680)">
                  <rect width="23" height="15" fill="#c0c0c0" stroke="#808080" />
                  <path d="M11.500 3v11M9 13.500h6" stroke="#ff0" strokeWidth="2" />
                  <path d="M7 4.500h10" stroke="#ff0" />
                  <path d="M2 4.500l3-2 5 3M21 4.500l-3-2-5 3M5.500 3l-4 8h7zM17.500 3l-4 8h7zM1 12.500h7M14 12.500h7M10.500 5v8M13.500 5v8" stroke="#000" fill="none" />
                </g>
              </Scale>
            </Axis>
          </Row>
          <Divider />

          <Row>
            <OscColumn>
              <OscPlot>
                <OscChart />
                <Legend $w={84} $label={39}>
                  <Term $c="#fff" $wide>Osc 16,64</Term>
                  <Term $c="#800080">OSC</Term><Value $c="#800080">82</Value>
                  <Term $c="#008080">UP</Term><Value $c="#008080">53</Value>
                  <Term $c="#008080">DN</Term><Value $c="#008080">-39</Value>
                </Legend>
              </OscPlot>
              <TabStrip>
                <ScrollButton aria-label="Previous tab"><svg width="6" height="10"><path d="M6 0v10L0 5z" /></svg></ScrollButton>
                <ScrollButton aria-label="Next tab"><svg width="6" height="10"><path d="M0 0v10l6-5z" /></svg></ScrollButton>
                <Tabs>
                  {tabs.map(([name, w, on]) => (
                    <Tab key={name} $w={w} $on={on}>
                      <TabShape aria-hidden="true"><path d={`M0 0l6 19.500h${w - 12}l6-19.500`} fill={on ? '#fff' : '#f0f0f0'} stroke="#000" /></TabShape>
                      <TabLabel>{name}</TabLabel>
                    </Tab>
                  ))}
                </Tabs>
              </TabStrip>
            </OscColumn>
            <Axis>
              <Scale top={702} first={723} step={7.080} count={43} from={2} boxY={855} box="0" labels={['100', '50', '', '-50', '-100']} />
            </Axis>
          </Row>
          <Divider />

          <DateRow>
            <DateStrip>
              <DateCell $first />
              <DateCell>09/19/22</DateCell><DateCell>09/26/22</DateCell><DateCell>10/03/22</DateCell><DateCell>10/10/22</DateCell>
              <DateCell>1<Cursor>10/19/22 - 11:00</Cursor></DateCell>
              <DateCell>10/24/22</DateCell><DateCell>10/31/22</DateCell>
            </DateStrip>
            <DateEnd />
          </DateRow>
        </Charts>

        <SideBar $w={28} $end={5}>
          {rightTools.map(([name, icon, down]) => <ToolButton key={name} $w={23} $down={down} aria-label={name}>{icon}</ToolButton>)}
          <Spacer $h />
          {viewTools.map(([name, icon]) => <ToolButton key={name} $w={23} aria-label={name}>{icon}</ToolButton>)}
          <Spacer $h />
          <ToolButton $w={23} $down aria-label="Magnet"><MagnetIcon /></ToolButton>
        </SideBar>
      </Body>

      <StatusBar>
        <StatusText>For Help, press F1</StatusText>
        <StatusPage>Page: 2 - STOXX B</StatusPage>
      </StatusBar>
    </Window>
  );
}
